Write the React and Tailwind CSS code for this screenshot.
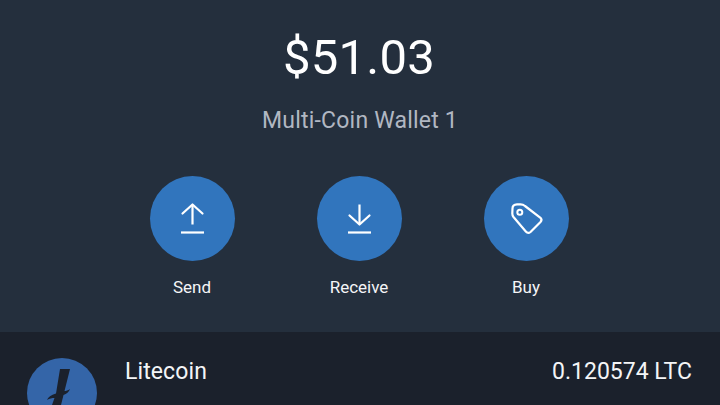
const ActionButton = ({ label, children }) => (
    <div className="flex flex-col items-center w-[85px]">
        <div className="w-[85px] h-[85px] rounded-full bg-[#3175bd] flex items-center justify-center">
            {children}
        </div>
        <span className="mt-[14px] pr-[1px] text-[17px] leading-[24px] text-[#f4f5f7] whitespace-nowrap">
            {label}
        </span>
    </div>
);

const App = () => {
    return (
        <div className="w-[720px] h-[405px] overflow-hidden flex flex-col bg-[#1b212c] text-white font-['Roboto',sans-serif]">
            {/* Balance */}
            <div className="h-[332px] shrink-0 bg-[#242f3d] flex flex-col items-center">
                <div className="mt-[28px] mr-[2px] text-[49px] leading-[60px] tracking-[0.2px] text-white">
                    $51.03
                </div>
                <div className="mt-[17px] text-[23px] leading-[32px] tracking-[0.2px] text-[#b1b7c2]">
                    Multi-Coin Wallet 1
                </div>
                <div className="mt-[39px] mr-[1px] flex gap-[82px]">
                    <ActionButton label="Send">
                        <svg width="36" height="36" viewBox="0 0 36 36" fill="none" stroke="white" strokeWidth="2.2">
                            <path d="M17.5 23.5V4" />
                            <path d="M7.5 12.5L17.5 3.5l10 9" strokeLinecap="round" strokeLinejoin="round" />
                            <path d="M6 31.5h23" />
                        </svg>
                    </ActionButton>
                    <ActionButton label="Receive">
                        <svg width="36" height="36" viewBox="0 0 36 36" fill="none" stroke="white" strokeWidth="2.2">
                            <path d="M17.5 3.5V23" />
                            <path d="M7.5 14.5L17.5 23.5l10-9" strokeLinecap="round" strokeLinejoin="round" />
                            <path d="M6 31.5h23" />
                        </svg>
                    </ActionButton>
                    <ActionButton label="Buy">
                        <svg width="36" height="36" viewBox="0 0 36 36" fill="none" stroke="white" strokeWidth="2.2" strokeLinejoin="round">
                            <path d="M3.5 7.5Q3.5 3.5 8 3.3L11.5 3.3Q14 3.3 16 5L31.5 16.8Q33.5 18.8 31.5 21L21.5 31Q19 33 16.8 30.5L4.5 16Q3.3 14.5 3.3 12.5z" />
                            <circle cx="10.8" cy="11.2" r="2.5" strokeWidth="2" />
                        </svg>
                    </ActionButton>
                </div>
            </div>

            {/* Coin row */}
            <div className="flex items-start justify-between pl-[27px] pr-[28px]">
                <div className="flex items-start">
                    <svg className="mt-[26px] shrink-0" width="70" height="70" viewBox="0 0 70 70">
                        <circle cx="35" cy="35" r="35" fill="#3465a8" />
                        <path d="M33 11H43L37.5 33C39 33 41 32.5 43 31C42 34 39.5 36 36.5 37L34 47H25L27.5 40C25 40 22.5 40.5 20 42C21 39 24 37 29 35.5Z" fill="#1b212c" />
                    </svg>
                    <span className="ml-[28px] mt-[25px] text-[23px] leading-[30px] tracking-[0.1px] text-[#f4f5f7]">
                        Litecoin
                    </span>
                </div>
                <span className="mt-[25px] text-[23px] leading-[30px] text-[#f4f5f7]">
                    0.120574 LTC
                </span>
            </div>
        </div>
    );
};

export default App;
